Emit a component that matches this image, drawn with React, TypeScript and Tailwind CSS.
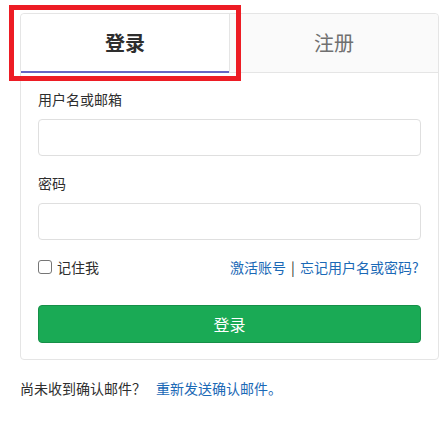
import { useState } from 'react';

const FONT = "font-['Noto_Sans_CJK_SC','Noto_Sans',sans-serif]";

export default function App() {
  const [tab, setTab] = useState<'login' | 'register'>('login');
  const [remember, setRemember] = useState(false);

  return (
    <div className={`relative min-h-[421px] bg-white pl-[20px] pr-[6px] pt-[13px] text-[14px] text-[#2e2e2e] ${FONT}`}>
      {/* Card */}
      <div className="w-[419px] rounded-[4px] border border-[#e5e5e5] bg-white">
        <div className="flex h-[59px]">
          <button
            onClick={() => setTab('login')}
            className="flex h-full w-[208px] items-center justify-center rounded-tl-[4px] border-b-2 border-[#6666c4] bg-white text-[20px] font-bold text-[#2e2e2e]"
          >
            登录
          </button>
          <button
            onClick={() => setTab('register')}
            className="flex h-full flex-1 items-center justify-center rounded-tr-[4px] border-b border-l border-[#e5e5e5] bg-[#fafafa] text-[20px] text-[#707070]"
          >
            注册
          </button>
        </div>

        <form className="px-[17px] pb-[16px] pt-[16px]" onSubmit={(e) => e.preventDefault()}>
          <label className="block leading-[20px]">用户名或邮箱</label>
          <input
            type="text"
            className="mt-[10px] block h-[37px] w-full rounded-[4px] border border-[#dfdfdf] px-3 outline-none focus:border-[#73afea]"
          />

          <label className="mt-[17px] block leading-[20px]">密码</label>
          <input
            type="password"
            className="mt-[10px] block h-[37px] w-full rounded-[4px] border border-[#dfdfdf] px-3 outline-none focus:border-[#73afea]"
          />

          <div className="mt-[17px] flex items-center justify-between leading-[20px]">
            <label className="flex items-center gap-[5px]">
              <input
                type="checkbox"
                checked={remember}
                onChange={(e) => setRemember(e.target.checked)}
                className="m-0 h-[14px] w-[14px] appearance-none rounded-[3px] border border-[#767676] bg-white checked:bg-[#1b69b6]"
              />
              <span>记住我</span>
            </label>
            <div className="flex items-center text-[#1b69b6]">
              <a href="#">激活账号</a>
              <span className="inline-block w-[14px] text-center text-[#2e2e2e]">|</span>
              <a href="#">忘记用户名或密码<span className="inline-block w-[9px]">?</span></a>
            </div>
          </div>

          <button
            type="submit"
            className="mt-[28px] flex h-[38px] w-full items-center justify-center rounded-[4px] border border-[#168f48] bg-[#1aaa55] text-[16px] text-white"
          >
            登录
          </button>
        </form>
      </div>

      <p className="mt-[18px] leading-[20px]">
        尚未收到确认邮件？
        <a href="#" className="ml-[10px] text-[#1b69b6]">
          重新发送确认邮件。
        </a>
      </p>

      {tab === 'login' || tab === 'register' ? (
        <div className="pointer-events-none absolute left-[9px] top-[5px] h-[76px] w-[232px] border-[5px] border-[#ed1c24]" />
      ) : null}
    </div>
  );
}
